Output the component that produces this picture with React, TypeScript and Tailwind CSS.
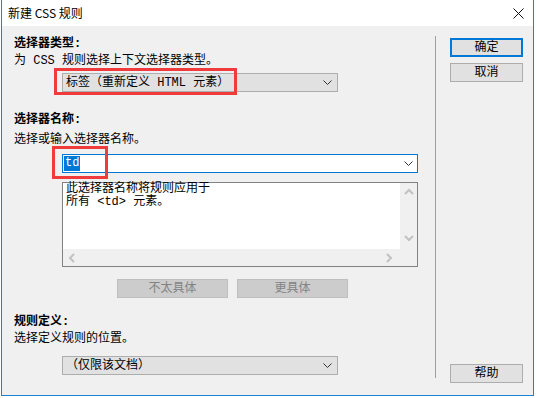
import React from "react";

const ui = { fontFamily: '"Liberation Mono", "Noto Sans CJK SC", monospace' };
const title = { fontFamily: '"Noto Sans CJK SC", "Noto Sans", sans-serif' };

function Chevron({ color = "#333" }: { color?: string }) {
  return (
    <svg width="9" height="5" viewBox="0 0 9 5" className="shrink-0">
      <polyline points="0.5,0.5 4.5,4.5 8.5,0.5" fill="none" stroke={color} strokeWidth="1" />
    </svg>
  );
}

function ScrollArrow({ dir }: { dir: "up" | "down" | "left" | "right" }) {
  const pts = {
    up: "1,6 5,2 9,6",
    down: "1,2 5,6 9,2",
    left: "6,1 2,5 6,9",
    right: "2,1 6,5 2,9",
  }[dir];
  return (
    <svg width="10" height="10" viewBox="0 0 10 10">
      <polyline points={pts} fill="none" stroke="#c2c2c2" strokeWidth="2" />
    </svg>
  );
}

function SelectBox({ text, width }: { text: string; width: string }) {
  return (
    <div
      className={`ml-[48px] ${width} h-[19px] flex items-center justify-between border border-[#adadad] bg-[#e1e1e1] pl-[3px] pr-[5px] text-[12px] leading-[16px] text-black`}
    >
      <span className="whitespace-pre">{text}</span>
      <Chevron />
    </div>
  );
}

function SideButton({ label, focused }: { label: string; focused?: boolean }) {
  return (
    <div
      className={`w-[73px] h-[19px] flex items-center justify-center bg-[#e1e1e1] text-[12px] leading-[16px] text-black ${
        focused ? "border-2 border-[#0078d7]" : "border border-[#adadad]"
      }`}
    >
      {label}
    </div>
  );
}

export default function App() {
  return (
    <div className="relative w-[537px] h-[398px] overflow-hidden bg-white" style={ui}>
      <div className="ml-[1px] w-[533px] h-[396px] flex flex-col border-x border-b border-[#1883d7]">
        {/* title bar */}
        <div className="h-[26px] shrink-0 bg-white flex items-center justify-between pl-[6px] pr-[9px]">
          <span className="text-[12px] leading-[16px] text-black" style={title}>
            新建 CSS 规则
          </span>
          <svg width="11" height="11" viewBox="0 0 11 11">
            <path d="M0.5 0.5 L10.5 10.5 M10.5 0.5 L0.5 10.5" stroke="#111" strokeWidth="1" />
          </svg>
        </div>

        {/* body */}
        <div className="flex-1 flex bg-[#f0f0f0]">
          <div className="w-[433px] shrink-0 flex flex-col pl-[12px] pt-[10px] text-[12px] leading-[16px] text-black">
            <div className="h-[16px] font-bold">选择器类型:</div>
            <div className="mt-[1px] h-[16px] whitespace-pre">为 CSS 规则选择上下文选择器类型。</div>
            <div className="mt-[4px]">
              <SelectBox text="标签（重新定义 HTML 元素）" width="w-[276px]" />
            </div>

            <div className="mt-[20px] h-[16px] font-bold">选择器名称:</div>
            <div className="mt-[4px] h-[16px]">选择或输入选择器名称。</div>
            <div className="mt-[6px] ml-[48px] w-[356px] h-[19px] flex items-center justify-between border border-[#0078d7] bg-white pl-[1px] pr-[4px]">
              <span className="bg-[#0078d7] text-white px-[1px] leading-[15px]">td</span>
              <Chevron />
            </div>

            <div className="mt-[9px] ml-[48px] w-[356px] h-[85px] border border-[#828282] bg-white flex flex-col">
              <div className="flex-1 flex">
                <div className="flex-1 pl-[3px] pt-0 leading-[13px]">
                  <div>此选择器名称将规则应用于</div>
                  <div className="whitespace-pre">所有 &lt;td&gt; 元素。</div>
                </div>
                <div className="w-[17px] bg-[#f0f0f0] flex flex-col items-center justify-between py-[5px]">
                  <ScrollArrow dir="up" />
                  <ScrollArrow dir="down" />
                </div>
              </div>
              <div className="h-[17px] flex">
                <div className="flex-1 bg-[#f0f0f0] flex items-center justify-between px-[5px]">
                  <ScrollArrow dir="left" />
                  <ScrollArrow dir="right" />
                </div>
                <div className="w-[17px] bg-[#f0f0f0]" />
              </div>
            </div>

            <div className="mt-[12px] ml-[103px] flex gap-[9px]">
              <div className="w-[111px] h-[19px] flex items-center justify-center border border-[#bfbfbf] bg-[#cccccc] text-[#838383]">
                不太具体
              </div>
              <div className="w-[111px] h-[19px] flex items-center justify-center border border-[#bfbfbf] bg-[#cccccc] text-[#838383]">
                更具体
              </div>
            </div>

            <div className="mt-[16px] h-[16px] font-bold">规则定义:</div>
            <div className="mt-[1px] h-[16px]">选择定义规则的位置。</div>
            <div className="mt-[9px]">
              <SelectBox text="（仅限该文档）" width="w-[276px]" />
            </div>
          </div>

          <div className="w-px mt-[10px] h-[342px] bg-[#a0a0a0]" />

          <div className="flex-1 flex flex-col pl-[14px] pt-[12px] pb-[12px]">
            <SideButton label="确定" focused />
            <div className="mt-[6px]">
              <SideButton label="取消" />
            </div>
            <div className="mt-auto">
              <SideButton label="帮助" />
            </div>
          </div>
        </div>
      </div>

      {/* red annotation boxes */}
      <div className="absolute left-[54px] top-[68px] w-[183px] h-[27px] border-[3px] border-[#ef3b3b]" />
      <div className="absolute left-[52px] top-[146px] w-[56px] h-[33px] border-[3px] border-[#ef3b3b]" />
    </div>
  );
}
